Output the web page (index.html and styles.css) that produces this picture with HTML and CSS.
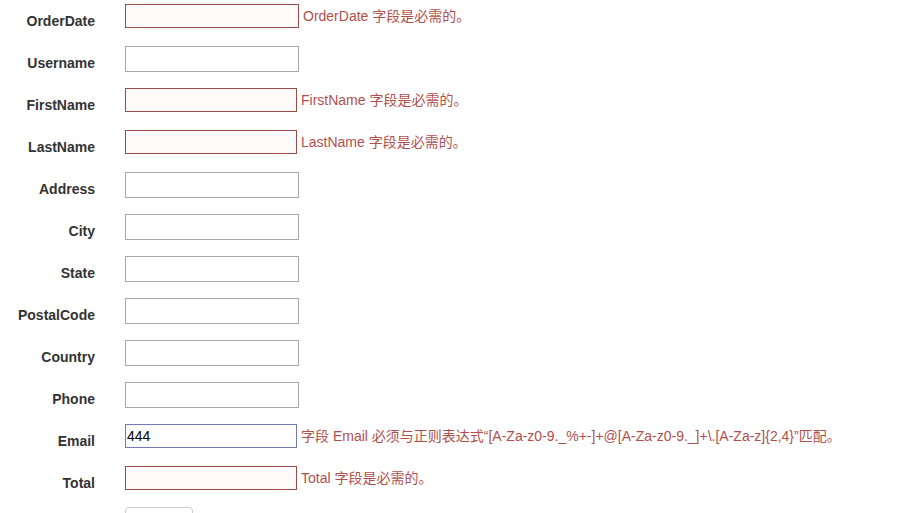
FILE: index.html
```html
<!DOCTYPE html>
<html lang="zh">
<head>
<meta charset="utf-8">
<title>Create</title>
<link rel="stylesheet" href="styles.css">
</head>
<body>
<form class="form">
  <div class="row">
    <label class="label">OrderDate</label>
    <div class="field"><input class="input error wide" type="text"><span class="msg">OrderDate 字段是必需的。</span></div>
  </div>
  <div class="row">
    <label class="label">Username</label>
    <div class="field"><input class="input" type="text"></div>
  </div>
  <div class="row">
    <label class="label">FirstName</label>
    <div class="field"><input class="input error" type="text"><span class="msg">FirstName 字段是必需的。</span></div>
  </div>
  <div class="row">
    <label class="label">LastName</label>
    <div class="field"><input class="input error" type="text"><span class="msg">LastName 字段是必需的。</span></div>
  </div>
  <div class="row">
    <label class="label">Address</label>
    <div class="field"><input class="input" type="text"></div>
  </div>
  <div class="row">
    <label class="label">City</label>
    <div class="field"><input class="input" type="text"></div>
  </div>
  <div class="row">
    <label class="label">State</label>
    <div class="field"><input class="input" type="text"></div>
  </div>
  <div class="row">
    <label class="label">PostalCode</label>
    <div class="field"><input class="input" type="text"></div>
  </div>
  <div class="row">
    <label class="label">Country</label>
    <div class="field"><input class="input" type="text"></div>
  </div>
  <div class="row">
    <label class="label">Phone</label>
    <div class="field"><input class="input" type="text"></div>
  </div>
  <div class="row">
    <label class="label">Email</label>
    <div class="field"><input class="input error focus" type="text" value="444"><span class="msg">字段 Email 必须与正则表达式“[A-Za-z0-9._%+-]+@[A-Za-z0-9._]+\.[A-Za-z]{2,4}”匹配。</span></div>
  </div>
  <div class="row">
    <label class="label">Total</label>
    <div class="field"><input class="input error" type="text"><span class="msg">Total 字段是必需的。</span></div>
  </div>
  <div class="row">
    <div class="label"></div>
    <div class="field"><button class="btn" type="submit" aria-label="Create"></button></div>
  </div>
</form>
</body>
</html>
```

FILE: styles.css
```css
html, body {
  margin: 0;
  padding: 0;
  background: #fff;
  font-family: "Liberation Sans", Arial, "Noto Sans CJK SC", sans-serif;
  font-size: 14px;
  color: #333;
}

.form {
  padding-top: 4px;
}

.row {
  display: flex;
  align-items: flex-start;
  height: 42px;
}

.label {
  box-sizing: border-box;
  width: 110px;
  padding: 7px 15px 0 0;
  text-align: right;
  font-weight: bold;
  line-height: 20px;
  color: #333;
  flex-shrink: 0;
}

.field {
  display: flex;
  align-items: center;
  padding-left: 15px;
  white-space: nowrap;
}

.input {
  box-sizing: border-box;
  width: 174px;
  height: 26px;
  margin: 0;
  padding: 0 1px;
  border: 1px solid #a9a9a9;
  background: #fff;
  font-family: "Liberation Sans", Arial, sans-serif;
  font-size: 14px;
  color: #000;
  outline: none;
}

.input.error {
  width: 172px;
  height: 24px;
  border-color: #9e4a48;
  background: #fffafa;
}

.input.error.wide {
  width: 174px;
}

.input.focus {
  border-color: #7478b8;
  background: #fff;
}

.msg {
  margin-left: 4px;
  line-height: 20px;
  color: #b0504e;
  font-size: 14px;
}

.btn {
  box-sizing: border-box;
  width: 68px;
  height: 34px;
  margin-top: -1px;
  padding: 0;
  border: 1px solid #ccc;
  border-radius: 4px;
  background: #fff;
}
```
